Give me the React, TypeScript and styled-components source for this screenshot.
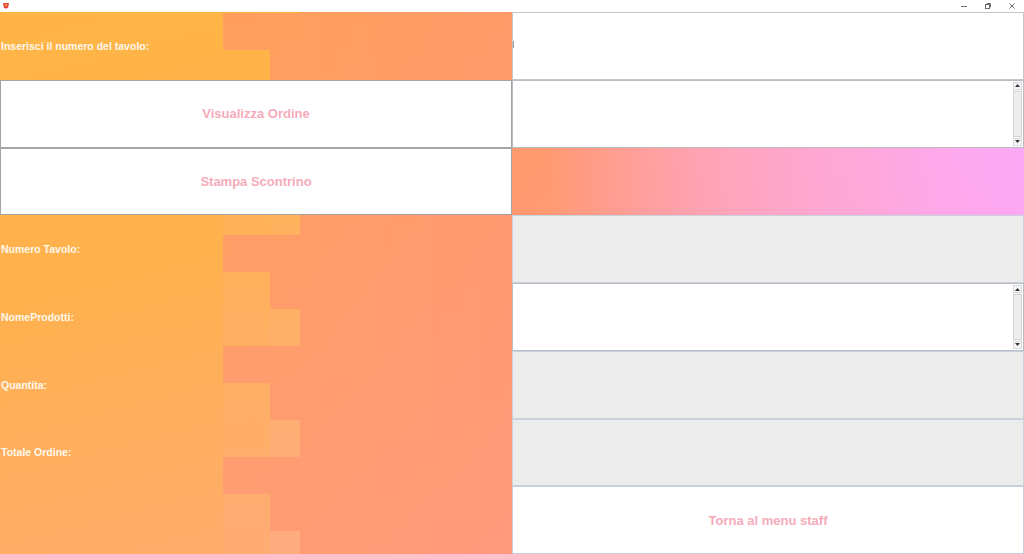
import React from 'react';
import styled, { createGlobalStyle } from 'styled-components';

const GlobalStyle = createGlobalStyle`
  html, body {
    margin: 0;
    padding: 0;
    width: 1024px;
    height: 554px;
    overflow: hidden;
    background: #ffffff;
  }
  * { box-sizing: border-box; }
`;

/* ---------- background artwork (stepped gradient) ---------- */
const H = 542;
const BAND = 37;
const OFFSET = 1;
type Band = 'A' | 'B' | 'C';

const clamp = (v: number) => Math.max(0, Math.min(255, Math.round(v)));

function light(x: number, y: number): string {
  const u = Math.min(x / 300, 1);
  const t = y / H;
  const g = 181 - 5 * t - 5 * u * t;
  const b = 69 + 5 * t + 62 * u * u * t;
  return `rgb(255,${clamp(g)},${clamp(b)})`;
}

function strip(x: number, lightIn: Band[]): string {
  const stops: string[] = [];
  for (let start = OFFSET - BAND; start < H; start += BAND) {
    const k = Math.round((start - OFFSET) / BAND);
    const band = (['B', 'C', 'A'] as Band[])[((k % 3) + 3) % 3];
    const s = Math.max(0, start);
    const e = Math.min(H, start + BAND);
    if (lightIn.includes(band)) {
      stops.push(`${light(x, s)} ${s}px`, `${light(x, e)} ${e}px`);
    } else {
      stops.push(`transparent ${s}px`, `transparent ${e}px`);
    }
  }
  return `linear-gradient(to bottom, ${stops.join(', ')})`;
}

const STRIP_MID = strip(246, ['A', 'C']);
const STRIP_OUTER = strip(285, ['A']);
const STRIP_LEFT = `linear-gradient(165deg, ${light(0, 0)} 0%, ${light(140, 271)} 50%, ${light(223, 542)} 100%)`;

/* ---------- window chrome ---------- */
const Window = styled.div`
  width: 1024px;
  height: 554px;
  display: flex;
  flex-direction: column;
  font-family: "Liberation Sans", Arial, sans-serif;
`;

const TitleBar = styled.div`
  height: 12px;
  flex: none;
  background: #ffffff;
  display: flex;
  align-items: center;
  justify-content: space-between;
  padding: 0 8px 0 2px;
`;

const Controls = styled.div`
  display: flex;
  align-items: center;
  gap: 16px;
  color: #6b6b6b;
`;

const ControlGlyph = styled.svg`
  width: 8px;
  height: 8px;
  display: block;
`;

/* ---------- content grid ---------- */
const Content = styled.div`
  height: 542px;
  display: grid;
  grid-template-columns: 512px 512px;
  grid-template-rows: repeat(8, 1fr);
  background:
    ${STRIP_MID} 223px 0 / 47px 100% no-repeat,
    ${STRIP_OUTER} 270px 0 / 30px 100% no-repeat,
    ${STRIP_LEFT} 0 0 / 223px 100% no-repeat,
    linear-gradient(to bottom, rgba(255, 150, 170, 0) 0%, rgba(255, 150, 170, 0.3) 100%),
    linear-gradient(
      to right,
      #ffa055 0px,
      #ff9e5e 300px,
      #ff9a68 512px,
      #ff9a6a 545px,
      #ff9f96 630px,
      #ffa5bb 720px,
      #ffa9d6 820px,
      #fdaaf0 940px,
      #fcaafc 1024px
    );
`;

const Label = styled.div`
  display: flex;
  align-items: center;
  padding-left: 1px;
  color: #fff8ec;
  font-size: 10.5px;
  font-weight: 700;
  white-space: nowrap;
`;

const ActionButton = styled.button<{ $edge: string }>`
  margin: 0;
  border: 1px solid ${(p) => p.$edge};
  background: #ffffff;
  color: #f5abb9;
  font-family: "Liberation Sans", Arial, sans-serif;
  font-size: 13px;
  font-weight: 700;
  display: flex;
  align-items: center;
  justify-content: center;
  padding: 0;
  cursor: pointer;
`;

const TextField = styled.div`
  border: 1px solid #c4c6ca;
  background: #ffffff;
  display: flex;
  align-items: center;
`;

const Caret = styled.span`
  width: 1px;
  height: 7px;
  background: #9a9a9a;
  margin-top: -2px;
`;

const ReadOnlyField = styled.div`
  border: 1px solid #c9d1dc;
  background: #ececec;
`;

const Empty = styled.div``;

const ScrollPane = styled.div`
  border: 1px solid #b9bcc2;
  background: #ffffff;
  display: flex;
  justify-content: flex-end;
  padding: 1px 1px 1px 0;
`;

const ScrollBar = styled.div`
  width: 9px;
  display: flex;
  flex-direction: column;
  background: #f4f4f4;
`;

const ArrowBox = styled.div`
  height: 8px;
  flex: none;
  display: flex;
  align-items: center;
  justify-content: center;
  background: #f6f6f6;
  border: 1px solid #dadada;
`;

const Thumb = styled.div`
  flex: 1;
  margin: 1px 0;
  background: #ededed;
  border: 1px solid #d4d4d4;
`;

const Arrow = ({ up }: { up?: boolean }) => (
  <svg width="5" height="3" viewBox="0 0 5 3">
    <polygon points={up ? '0,3 5,3 2.5,0' : '0,0 5,0 2.5,3'} fill="#333" />
  </svg>
);

const Scroller = () => (
  <ScrollPane>
    <ScrollBar>
      <ArrowBox>
        <Arrow up />
      </ArrowBox>
      <Thumb />
      <ArrowBox>
        <Arrow />
      </ArrowBox>
    </ScrollBar>
  </ScrollPane>
);

const AppIcon = () => (
  <svg width="8" height="8" viewBox="0 0 8 8">
    <path d="M1 1 H7 L6.2 5.2 Q4 7.8 1.8 5.2 Z" fill="#e8473c" />
    <path d="M3 2 H5.2 L4.8 4 Q4 5 3.3 4 Z" fill="#f79a4a" />
  </svg>
);

export default function App() {
  return (
    <>
      <GlobalStyle />
      <Window>
        <TitleBar>
          <AppIcon />
          <Controls>
            <ControlGlyph viewBox="0 0 8 8">
              <line x1="1" y1="4.5" x2="7" y2="4.5" stroke="currentColor" strokeWidth="1" />
            </ControlGlyph>
            <ControlGlyph viewBox="0 0 8 8">
              <rect x="1.5" y="2.5" width="4" height="4" fill="none" stroke="currentColor" strokeWidth="1" />
              <path d="M3 2.5 V1.5 H6.5 V5 H5.5" fill="none" stroke="currentColor" strokeWidth="1" />
            </ControlGlyph>
            <ControlGlyph viewBox="0 0 8 8">
              <path d="M1.5 1.5 L6.5 6.5 M6.5 1.5 L1.5 6.5" stroke="currentColor" strokeWidth="1" />
            </ControlGlyph>
          </Controls>
        </TitleBar>
        <Content>
          <Label>Inserisci il numero del tavolo:</Label>
          <TextField>
            <Caret />
          </TextField>

          <ActionButton $edge="#a4a4a4">Visualizza Ordine</ActionButton>
          <Scroller />

          <ActionButton $edge="#a4a4a4">Stampa Scontrino</ActionButton>
          <Empty />

          <Label>Numero Tavolo:</Label>
          <ReadOnlyField />

          <Label>NomeProdotti:</Label>
          <Scroller />

          <Label>Quantita:</Label>
          <ReadOnlyField />

          <Label>Totale Ordine:</Label>
          <ReadOnlyField />

          <Empty />
          <ActionButton $edge="#c6cdd8">Torna al menu staff</ActionButton>
        </Content>
      </Window>
    </>
  );
}
